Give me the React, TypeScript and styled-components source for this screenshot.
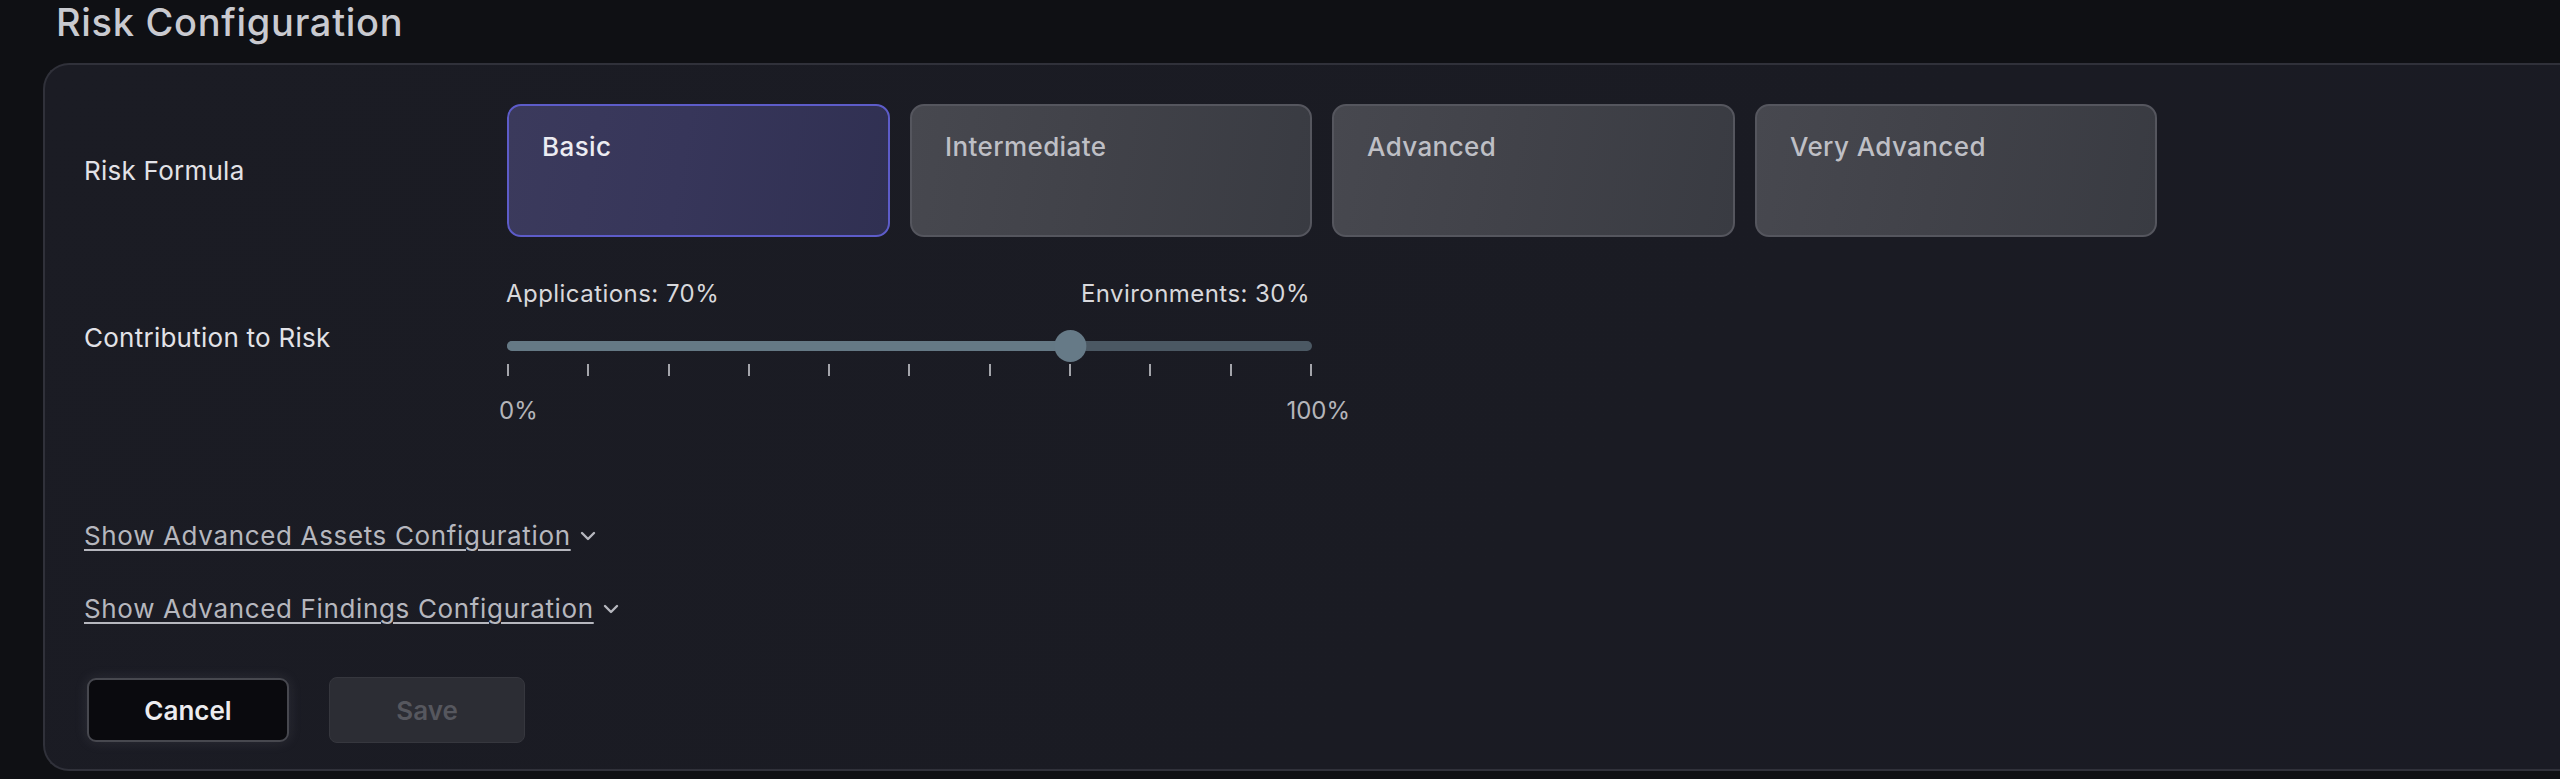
import React from "react";
import styled, { createGlobalStyle } from "styled-components";

const GlobalStyle = createGlobalStyle`
  html, body {
    margin: 0;
    padding: 0;
    background: #0f1014;
    overflow: hidden;
  }
  body {
    font-family: Inter, "Noto Sans", "Liberation Sans", sans-serif;
    -webkit-font-smoothing: antialiased;
  }
  * { box-sizing: border-box; }
`;

const Page = styled.div`
  width: 2560px;
  height: 779px;
  padding-top: 0;
  background: #0f1014;
`;

const Title = styled.h1`
  margin: 0 0 19px 56px;
  font-size: 38px;
  letter-spacing: 0.7px;
  font-weight: 500;
  line-height: 44px;
  color: #c9cad0;
`;

const Card = styled.section`
  margin-left: 43px;
  width: 2560px;
  border: 2px solid #30313a;
  border-right: none;
  border-radius: 26px 0 0 26px;
  background: linear-gradient(135deg, #1b1c24 0%, #1a1b23 60%, #1a1b24 100%);
  padding: 39px 0 26px 39px;
  display: flex;
  flex-direction: column;
`;

const Row = styled.div<{ $top?: number }>`
  display: grid;
  grid-template-columns: 423px auto;
  align-items: ${(p) => (p.$top !== undefined ? "start" : "center")};
`;

const Label = styled.div<{ $offset?: number }>`
  font-size: 26px;
  line-height: 32px;
  letter-spacing: 0.25px;
  font-weight: 400;
  color: #e2e2e7;
  margin-top: ${(p) => p.$offset ?? 0}px;
`;

const Options = styled.div`
  display: flex;
  gap: 20px;
`;

const Option = styled.button<{ $active?: boolean; $w: number }>`
  width: ${(p) => p.$w}px;
  height: 133px;
  border-radius: 14px;
  padding: 25px 0 0 33px;
  text-align: left;
  display: flex;
  align-items: flex-start;
  font-family: inherit;
  font-size: 26px;
  line-height: 32px;
  letter-spacing: 0.4px;
  font-weight: 500;
  cursor: pointer;
  border: 2px solid ${(p) => (p.$active ? "#5d5cc9" : "#55565e")};
  color: ${(p) => (p.$active ? "#ececf2" : "#bebfc5")};
  background: ${(p) =>
    p.$active
      ? "linear-gradient(100deg, #3b3a5c 0%, #37365a 45%, #303052 100%)"
      : "linear-gradient(100deg, #47484f 0%, #414249 45%, #393b42 100%)"};
`;

const SliderRow = styled(Row)`
  margin-top: 42px;
`;

const Slider = styled.div`
  width: 805px;
  display: flex;
  flex-direction: column;
`;

const SliderLabels = styled.div`
  display: flex;
  justify-content: space-between;
  font-size: 24px;
  line-height: 29px;
  letter-spacing: 0.45px;
  color: #d8d8dc;
  padding-right: 2px;
  margin-left: -1px;
`;

const TrackArea = styled.div`
  position: relative;
  height: 32px;
  margin-top: 22px;
  display: flex;
  align-items: center;
`;

const Track = styled.div`
  width: 100%;
  height: 10px;
  border-radius: 5px;
  background: #4b5863;
  overflow: hidden;
`;

const TrackFill = styled.div`
  height: 100%;
  background: #657985;
`;

const Thumb = styled.div`
  position: absolute;
  top: 0;
  width: 32px;
  height: 32px;
  border-radius: 50%;
  background: #667a87;
  transform: translateX(-52%);
`;

const Ticks = styled.div`
  display: flex;
  justify-content: space-between;
  margin-top: 2px;
  height: 12px;
`;

const Tick = styled.span`
  width: 2px;
  height: 12px;
  background: #a4a5ab;
`;

const ScaleLabels = styled.div`
  display: flex;
  justify-content: space-between;
  margin: 20px -38px 0 -8px;
  font-size: 24px;
  line-height: 29px;
  color: #b4b5ba;
`;

const Links = styled.div`
  margin-top: 95px;
  display: flex;
  flex-direction: column;
  gap: 41px;
  align-items: flex-start;
`;

const LinkButton = styled.a`
  display: inline-flex;
  align-items: center;
  gap: 9px;
  font-size: 26px;
  line-height: 32px;
  letter-spacing: 0.65px;
  color: #b6b7be;
  cursor: pointer;
  span {
    text-decoration: underline;
    text-decoration-thickness: 2px;
    text-underline-offset: 4px;
  }
  svg { flex: none; }
`;

const Actions = styled.div`
  margin-top: 52px;
  display: flex;
  align-items: center;
  gap: 40px;
  margin-left: 3px;
`;

const CancelButton = styled.button`
  width: 202px;
  height: 64px;
  border-radius: 9px;
  border: 2px solid #47484f;
  background: #0a0a0e;
  color: #ececef;
  font-family: inherit;
  font-size: 26px;
  font-weight: 600;
  box-shadow: 0 0 14px rgba(180, 180, 200, 0.12);
  cursor: pointer;
`;

const SaveButton = styled.button`
  width: 196px;
  height: 66px;
  border-radius: 8px;
  border: 1px solid #36373e;
  background: #2c2d34;
  color: #56575e;
  font-family: inherit;
  font-size: 26px;
  font-weight: 600;
`;

const Chevron = () => (
  <svg width="16" height="10" viewBox="0 0 16 10" fill="none">
    <path d="M2 2l6 6 6-6" stroke="#b6b7be" strokeWidth="2.4" strokeLinecap="round" strokeLinejoin="round" />
  </svg>
);

const options = [
  { label: "Basic", w: 383, active: true },
  { label: "Intermediate", w: 402 },
  { label: "Advanced", w: 403 },
  { label: "Very Advanced", w: 402 },
];

export default function App() {
  const value = 70;
  return (
    <Page>
      <GlobalStyle />
      <Title>Risk Configuration</Title>
      <Card>
        <Row>
          <Label>Risk Formula</Label>
          <Options>
            {options.map((o) => (
              <Option key={o.label} $w={o.w} $active={o.active}>
                {o.label}
              </Option>
            ))}
          </Options>
        </Row>
        <SliderRow $top={0}>
          <Label $offset={43}>Contribution to Risk</Label>
          <Slider>
            <SliderLabels>
              <span>Applications: {value}%</span>
              <span>Environments: {100 - value}%</span>
            </SliderLabels>
            <TrackArea>
              <Track>
                <TrackFill style={{ width: `${value}%` }} />
              </Track>
              <Thumb style={{ left: `${value}%` }} />
            </TrackArea>
            <Ticks>
              {Array.from({ length: 11 }).map((_, i) => (
                <Tick key={i} />
              ))}
            </Ticks>
            <ScaleLabels>
              <span>0%</span>
              <span>100%</span>
            </ScaleLabels>
          </Slider>
        </SliderRow>
        <Links>
          <LinkButton>
            <span>Show Advanced Assets Configuration</span>
            <Chevron />
          </LinkButton>
          <LinkButton>
            <span>Show Advanced Findings Configuration</span>
            <Chevron />
          </LinkButton>
        </Links>
        <Actions>
          <CancelButton>Cancel</CancelButton>
          <SaveButton disabled>Save</SaveButton>
        </Actions>
      </Card>
    </Page>
  );
}
